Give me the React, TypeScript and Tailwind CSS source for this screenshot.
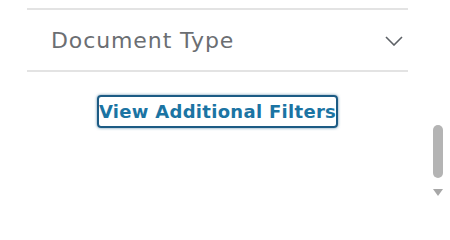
import React from "react";

export default function App() {
  return (
    <div className="relative w-[450px] h-[203px] bg-white overflow-hidden" style={{ fontFamily: '"DejaVu Sans", sans-serif' }}>
      <div className="ml-[27px] w-[381px] pt-[8px]">
        <div className="border-t-2 border-b-2 border-[#e3e3e3] h-[64px] flex items-center justify-between pl-[24px] pr-[5px]">
          <span className="text-[22px] text-[#6b6e72] leading-none tracking-[0.9px] mt-[2px]">Document Type</span>
          <svg width="18" height="10" viewBox="0 0 18 10" className="mt-[1px]">
            <path d="M1 1 L9 9 L17 1" fill="none" stroke="#5d6166" strokeWidth="1.6" />
          </svg>
        </div>
        <div className="flex justify-center mt-[23px]">
          <button className="h-[33px] px-0 border-2 border-[#1c5b84] rounded-[4px] shadow-[0_0_3px_rgba(28,91,132,0.7)] text-[#1b74a3] font-bold text-[18px] tracking-[0.3px] leading-none whitespace-nowrap">
            View Additional Filters
          </button>
        </div>
      </div>
      <div className="absolute right-[7px] top-[125px] w-[10px] h-[53px] rounded-full bg-[#b4b4b4]" />
      <div className="absolute right-[7px] top-[189px] w-0 h-0 border-l-[5px] border-r-[5px] border-t-[7px] border-l-transparent border-r-transparent border-t-[#a7a7a7]" />
    </div>
  );
}
